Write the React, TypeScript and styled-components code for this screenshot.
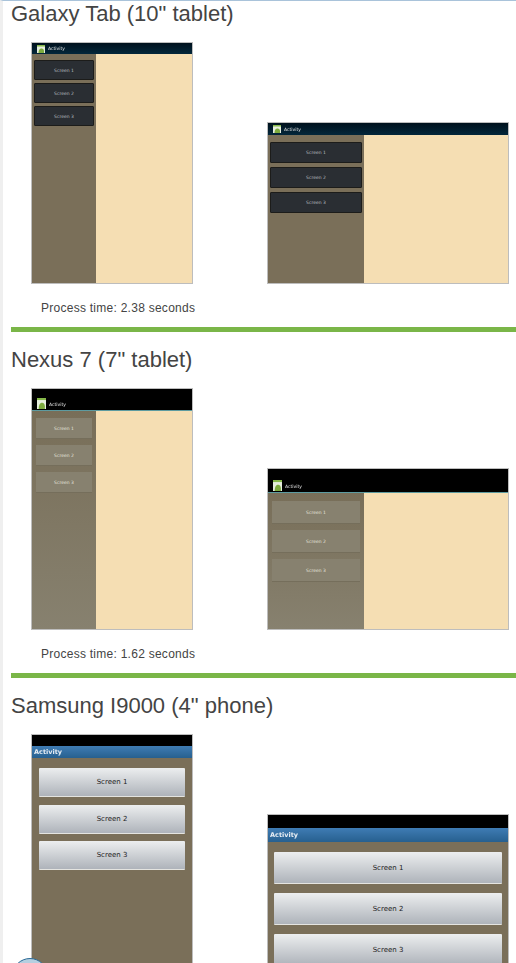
import React from 'react';
import styled, { createGlobalStyle, css } from 'styled-components';

type Skin = 'honeycomb' | 'holo' | 'gingerbread';

type ScreenShot = {
    wide: boolean;
    barHeight: number;
    paneWidth: number;
    padTop: number;
    padSide: number;
    buttonHeight: number;
    gap: number;
};

type Device = {
    name: string;
    time?: string;
    skin: Skin;
    shots: ScreenShot[];
};

const devices: Device[] = [
    {
        name: 'Galaxy Tab (10" tablet)',
        time: '2.38',
        skin: 'honeycomb',
        shots: [
            { wide: false, barHeight: 11, paneWidth: 64, padTop: 6, padSide: 2, buttonHeight: 20, gap: 3 },
            { wide: true, barHeight: 12, paneWidth: 96, padTop: 7, padSide: 2, buttonHeight: 21, gap: 4 },
        ],
    },
    {
        name: 'Nexus 7 (7" tablet)',
        time: '1.62',
        skin: 'holo',
        shots: [
            { wide: false, barHeight: 22, paneWidth: 64, padTop: 7, padSide: 4, buttonHeight: 21, gap: 6 },
            { wide: true, barHeight: 24, paneWidth: 96, padTop: 8, padSide: 4, buttonHeight: 23, gap: 6 },
        ],
    },
    {
        name: 'Samsung I9000 (4" phone)',
        skin: 'gingerbread',
        shots: [
            { wide: false, barHeight: 12, paneWidth: 0, padTop: 10, padSide: 7, buttonHeight: 29, gap: 7.5 },
            { wide: true, barHeight: 14, paneWidth: 0, padTop: 10, padSide: 6, buttonHeight: 32, gap: 9 },
        ],
    },
];

const buttonLabels = ['Screen 1', 'Screen 2', 'Screen 3'];

const AppIcon = ({ tall }: { tall: boolean }) => (
    <svg width={tall ? 9 : 8} height={tall ? 11 : 8} viewBox="0 0 8 8" preserveAspectRatio="none">
        <rect width="8" height="8" fill="#e6eedd" />
        <rect width="8" height="1.5" fill="#86b84a" />
        <path d="M1.5 8 C1.5 4.5 3 3.4 4.6 3.4 C6 3.4 7 4.6 7 6 L7 8 Z" fill="#7dab3e" />
    </svg>
);

const App = () => (
    <>
        <GlobalStyle />
        <Page>
            {devices.map(device => (
                <Section key={device.name}>
                    <Heading>{device.name}</Heading>
                    <ShotRow>
                        {device.shots.map(shot => (
                            <Frame key={String(shot.wide)} $wide={shot.wide}>
                                {device.skin === 'gingerbread' && <StatusBar $wide={shot.wide} />}
                                <TitleBar $skin={device.skin} $height={shot.barHeight}>
                                    {device.skin !== 'gingerbread' && <AppIcon tall={device.skin === 'holo'} />}
                                    <TitleText $skin={device.skin}>Activity</TitleText>
                                </TitleBar>
                                <Panes $paneWidth={shot.paneWidth}>
                                    <ButtonPane
                                        $skin={device.skin}
                                        $padTop={shot.padTop}
                                        $padSide={shot.padSide}
                                        $gap={shot.gap}
                                    >
                                        {buttonLabels.map(label => (
                                            <ScreenButton key={label} $skin={device.skin} $height={shot.buttonHeight}>
                                                {label}
                                            </ScreenButton>
                                        ))}
                                    </ButtonPane>
                                    {shot.paneWidth > 0 && <DetailPane />}
                                </Panes>
                            </Frame>
                        ))}
                    </ShotRow>
                    {device.time && (
                        <>
                            <ProcessTime>Process time: {device.time} seconds</ProcessTime>
                            <Divider />
                        </>
                    )}
                </Section>
            ))}
            <HelpBubble />
        </Page>
    </>
);

// styled-components
const GlobalStyle = createGlobalStyle`
    html, body {
        margin: 0;
        height: 100%;
        overflow: hidden;
        background: #fff;
    }
`;

const Page = styled.div`
    position: relative;
    height: 963px;
    overflow: hidden;
    box-sizing: border-box;
    border-top: 1px solid #a9c3da;
    border-left: 3px solid #efefef;
    padding-left: 8px;
    font-family: "Liberation Sans", Arial, sans-serif;
`;

const Section = styled.section`
    &:not(:first-child) {
        padding-top: 15px;
    }
`;

const Heading = styled.h2`
    margin: 0 0 15px;
    height: 26px;
    font-size: 22px;
    line-height: 26px;
    font-weight: normal;
    color: #444;
`;

const ShotRow = styled.div`
    display: flex;
    align-items: flex-end;
    gap: 74px;
    padding-left: 20px;
`;

const Frame = styled.div<{ $wide: boolean }>`
    display: flex;
    flex-direction: column;
    flex: none;
    box-sizing: border-box;
    width: ${({ $wide }) => ($wide ? 242 : 162)}px;
    height: ${({ $wide }) => ($wide ? 162 : 242)}px;
    border: 1px solid #bdbdbd;
    background: #7a6f59;
    font-family: "DejaVu Sans", sans-serif;
`;

const StatusBar = styled.div<{ $wide: boolean }>`
    flex: none;
    height: ${({ $wide }) => ($wide ? 13 : 11)}px;
    background: #000;
`;

const TitleBar = styled.div<{ $skin: Skin; $height: number }>`
    display: flex;
    flex: none;
    gap: 3px;
    box-sizing: border-box;
    height: ${({ $height }) => $height}px;
    ${({ $skin }) => {
        switch ($skin) {
            case 'honeycomb':
                return css`
                    align-items: center;
                    padding-left: 5px;
                    background: linear-gradient(#00111d, #03273b);
                `;
            case 'holo':
                return css`
                    align-items: flex-end;
                    padding: 0 0 1px 5px;
                    background: #000;
                    border-bottom: 1px solid #5d9ba0;
                `;
            default:
                return css`
                    align-items: center;
                    padding-left: 2px;
                    background: linear-gradient(#3f7cb4, #27608f);
                `;
        }
    }}
`;

const TitleText = styled.span<{ $skin: Skin }>`
    filter: blur(0.3px);
    font-size: ${({ $skin }) => ($skin === 'gingerbread' ? 6.5 : 4.5)}px;
    font-weight: ${({ $skin }) => ($skin === 'gingerbread' ? 'bold' : 'normal')};
    color: ${({ $skin }) => ($skin === 'gingerbread' ? '#e8eef4' : '#e4e4e4')};
    ${({ $skin }) => $skin === 'holo' && css`
        margin-bottom: 2px;
    `}
`;

const Panes = styled.div<{ $paneWidth: number }>`
    display: grid;
    flex: 1;
    min-height: 0;
    grid-template-columns: ${({ $paneWidth }) => ($paneWidth > 0 ? `${$paneWidth}px 1fr` : '1fr')};
`;

const ButtonPane = styled.div<{ $skin: Skin; $padTop: number; $padSide: number; $gap: number }>`
    display: flex;
    flex-direction: column;
    gap: ${({ $gap }) => $gap}px;
    padding: ${({ $padTop, $padSide }) => `${$padTop}px ${$padSide}px 0`};
    background: ${({ $skin }) => ($skin === 'holo' ? 'linear-gradient(#786e58, #87816f)' : '#7a6f59')};
`;

const ScreenButton = styled.div<{ $skin: Skin; $height: number }>`
    display: flex;
    flex: none;
    align-items: center;
    justify-content: center;
    box-sizing: border-box;
    height: ${({ $height }) => $height}px;
    ${({ $skin }) => {
        switch ($skin) {
            case 'honeycomb':
                return css`
                    background: #2a2e33;
                    border: 1px solid #1c1c1a;
                    border-radius: 1px;
                    color: #bcbfc1;
                    font-size: 4.5px;
                `;
            case 'holo':
                return css`
                    background: #87816f;
                    border-bottom: 1px solid #756e5b;
                    color: #e6e4dd;
                    font-size: 4.5px;
                `;
            default:
                return css`
                    background: linear-gradient(#eceeef, #aeb3ba);
                    border-bottom: 1px solid #e4e4e0;
                    border-radius: 1px;
                    color: #222;
                    font-size: 7px;
                `;
        }
    }}
`;

const DetailPane = styled.div`
    background: #f5deb3;
`;

const ProcessTime = styled.div`
    margin: 15px 0 10px 30px;
    font-size: 12px;
    line-height: 18px;
    letter-spacing: 0.26px;
    color: #444;
`;

const Divider = styled.div`
    height: 5px;
    background: #7ab648;
`;

const HelpBubble = styled.div`
    position: absolute;
    left: 9px;
    top: 957px;
    box-sizing: border-box;
    width: 36px;
    height: 36px;
    border: 1px solid #2a6a96;
    border-radius: 50%;
    background: #b5cfe0;
`;

export default App;
